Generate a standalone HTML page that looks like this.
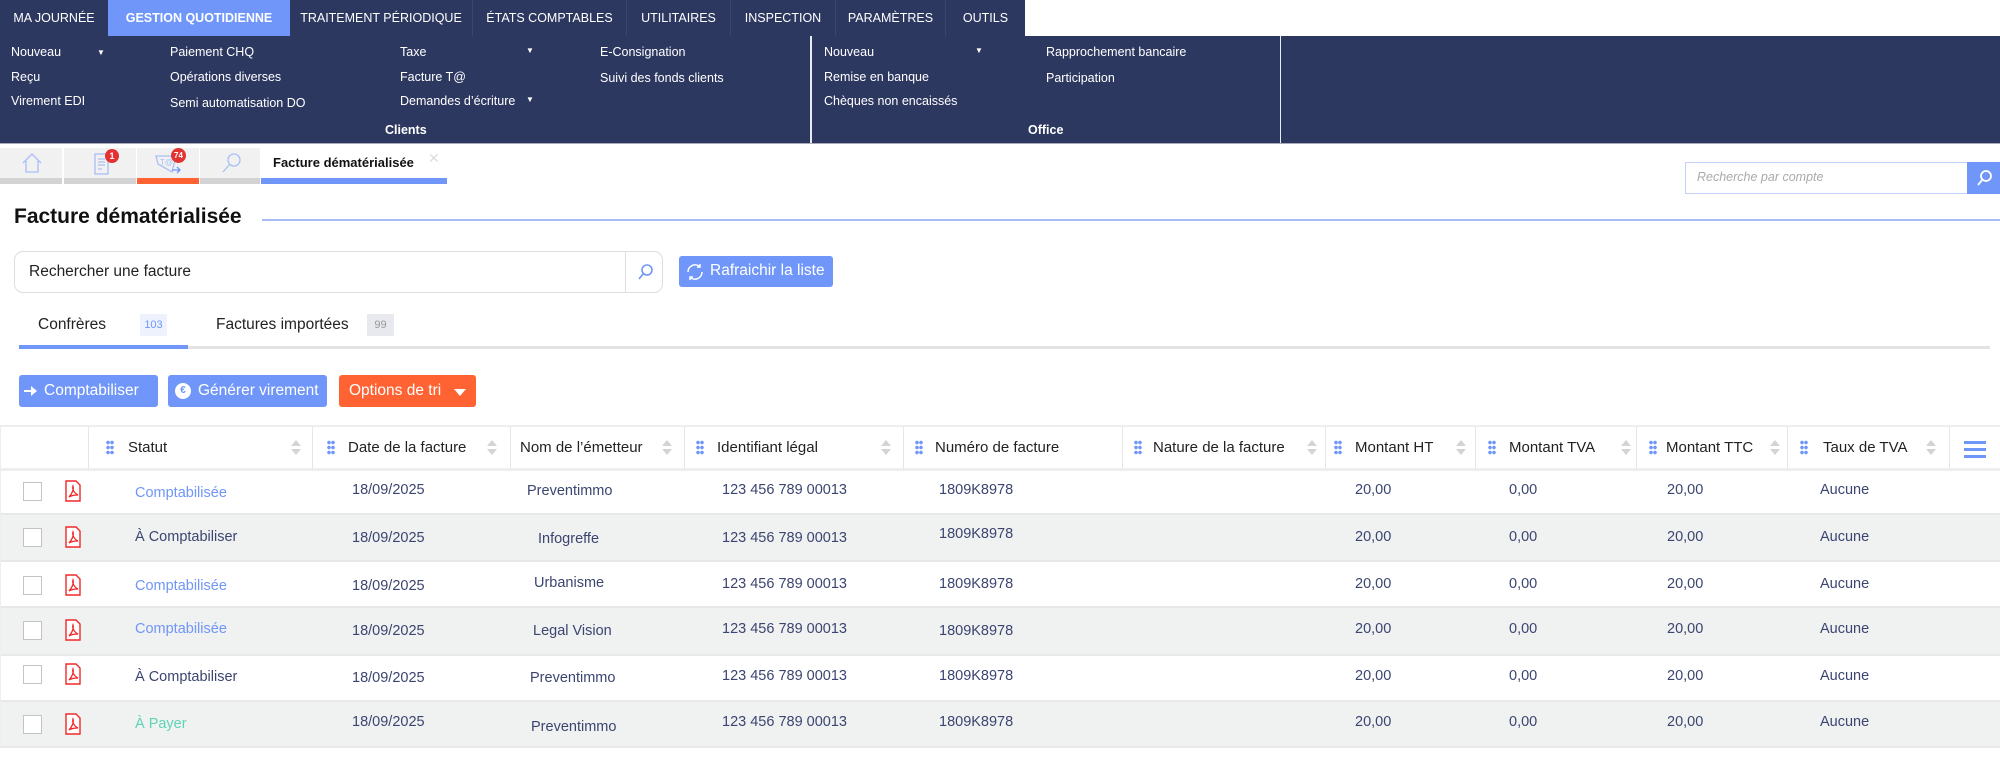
<!DOCTYPE html>
<html><head><meta charset="utf-8"><style>
*{margin:0;padding:0;box-sizing:border-box}
body{width:2000px;height:768px;overflow:hidden;background:#fff;font-family:"Liberation Sans",sans-serif;position:relative;color:#222}
.a{position:absolute;white-space:nowrap}
.nav{left:0;top:0;height:36px;width:1025px;background:#2d3861}
.nt{top:0;height:36px;line-height:36px;color:#fff;font-size:12.5px;text-align:center}
.panel{left:0;top:36px;width:2000px;height:108px;background:#2d3861}
.mi{color:#fff;font-size:12.5px}
.tri{font-size:8px;color:#fff}
.ic{top:148px;height:36px;background:#f1f1f1}
.bar{top:178px;height:6px}
.hd{top:425px;height:46px;border-top:2px solid #eee;border-bottom:3px solid #eee}
.vl{top:427px;height:42px;width:1px;background:#e6e6e6}
.ht{top:439px;font-size:15px;color:#222}
.dots{top:440px;width:8px;height:15px;background:radial-gradient(circle,#6f96f8 1.6px,transparent 2px) 0 0/4px 5px}
.sort{top:440px;width:10px;height:16px}
.sort:before{content:"";position:absolute;left:0;top:0;border:5px solid transparent;border-bottom:6px solid #d4d4d4;border-top:0}
.sort:after{content:"";position:absolute;left:0;top:9px;border:5px solid transparent;border-top:6px solid #d4d4d4;border-bottom:0}
.row{left:0;width:2000px;border-bottom:2px solid #e8e8e8}
.g{background:#f0f1f1}
.c{font-size:14.5px;color:#3b4570}
.cb{width:19px;height:19px;border:1.5px solid #c4c4c4;background:#fff}
.btn{top:375px;height:32px;border-radius:3px;color:#fff;font-size:15.5px;line-height:32px}
</style></head><body>
<div class="a nav"></div>
<div class="a nt" style="left:0;width:108px">MA JOURNÉE</div>
<div class="a nt" style="left:108px;width:182px;background:#6f96f8;font-weight:bold">GESTION QUOTIDIENNE</div>
<div class="a nt" style="left:290px;width:182px">TRAITEMENT PÉRIODIQUE</div>
<div class="a nt" style="left:472px;width:154px;border-left:1px solid #3a4570">ÉTATS COMPTABLES</div>
<div class="a nt" style="left:626px;width:104px;border-left:1px solid #3a4570">UTILITAIRES</div>
<div class="a nt" style="left:730px;width:105px;border-left:1px solid #3a4570">INSPECTION</div>
<div class="a nt" style="left:835px;width:110px;border-left:1px solid #3a4570">PARAMÈTRES</div>
<div class="a nt" style="left:945px;width:80px;border-left:1px solid #3a4570">OUTILS</div>
<div class="a panel"></div>
<div class="a" style="left:810px;top:36px;width:2px;height:108px;background:#e8ebf3"></div>
<div class="a" style="left:1280px;top:36px;width:1px;height:108px;background:#e8ebf3"></div>
<div class="a" style="left:0;top:143px;width:2000px;height:1px;background:#aab"></div>
<div class="a mi" style="left:11px;top:45px">Nouveau</div><div class="a tri" style="left:97px;top:48px">▼</div>
<div class="a mi" style="left:11px;top:70px">Reçu</div>
<div class="a mi" style="left:11px;top:94px">Virement EDI</div>
<div class="a mi" style="left:170px;top:45px">Paiement CHQ</div>
<div class="a mi" style="left:170px;top:70px">Opérations diverses</div>
<div class="a mi" style="left:170px;top:96px">Semi automatisation DO</div>
<div class="a mi" style="left:400px;top:45px">Taxe</div><div class="a tri" style="left:526px;top:46px">▼</div>
<div class="a mi" style="left:400px;top:70px">Facture T@</div>
<div class="a mi" style="left:400px;top:94px">Demandes d’écriture</div><div class="a tri" style="left:526px;top:95px">▼</div>
<div class="a mi" style="left:600px;top:45px">E-Consignation</div>
<div class="a mi" style="left:600px;top:71px">Suivi des fonds clients</div>
<div class="a mi" style="left:385px;top:123px;font-weight:bold">Clients</div>
<div class="a mi" style="left:824px;top:45px">Nouveau</div><div class="a tri" style="left:975px;top:46px">▼</div>
<div class="a mi" style="left:824px;top:70px">Remise en banque</div>
<div class="a mi" style="left:824px;top:94px">Chèques non encaissés</div>
<div class="a mi" style="left:1046px;top:45px">Rapprochement bancaire</div>
<div class="a mi" style="left:1046px;top:71px">Participation</div>
<div class="a mi" style="left:1028px;top:123px;font-weight:bold">Office</div>

<div class="a ic" style="left:0;width:62px"></div>
<div class="a ic" style="left:64px;width:72px"></div>
<div class="a ic" style="left:137px;width:62px"></div>
<div class="a ic" style="left:200px;width:60px"></div>
<div class="a bar" style="left:0;width:62px;background:#d3d3d3"></div>
<div class="a bar" style="left:64px;width:72px;background:#d3d3d3"></div>
<div class="a bar" style="left:137px;width:62px;background:#ff6333"></div>
<div class="a bar" style="left:200px;width:60px;background:#d3d3d3"></div>
<div class="a bar" style="left:261px;width:186px;background:#6f96f8"></div>
<svg class="a" style="left:20px;top:151px" width="24" height="24" viewBox="0 0 24 24" fill="none" stroke="#a9bff7" stroke-width="1.3"><path d="M3 12L12 3l9 9M6 9v12h12V9"/></svg>
<svg class="a" style="left:94px;top:152px" width="16" height="24" viewBox="0 0 16 24" fill="none" stroke="#a9bff7" stroke-width="1.3"><rect x="1" y="2" width="13" height="20"/><path d="M4 7h7M4 10h7M4 13h7M4 17h4"/></svg>
<div class="a" style="left:105px;top:149px;width:14px;height:14px;border-radius:7px;background:#e23232;color:#fff;font-size:9px;text-align:center;line-height:14px;font-weight:bold">1</div>
<svg class="a" style="left:154px;top:152px" width="30" height="24" viewBox="0 0 30 24" fill="none" stroke="#a9bff7" stroke-width="1.3"><path d="M2 4h20l-4 16-14-8z"/><text x="6" y="13" font-size="8" fill="#a9bff7" stroke="none">T@</text><path d="M18 18h8M23 15l3 3-3 3" stroke="#6f96f8"/></svg>
<div class="a" style="left:171px;top:148px;width:15px;height:15px;border-radius:8px;background:#e23232;color:#fff;font-size:8px;text-align:center;line-height:15px;font-weight:bold">74</div>
<svg class="a" style="left:220px;top:151px" width="24" height="24" viewBox="0 0 24 24" fill="none" stroke="#a9bff7" stroke-width="1.3"><circle cx="14" cy="9" r="6"/><path d="M10 13l-7 8"/></svg>
<div class="a" style="left:273px;top:155px;font-size:13px;font-weight:bold;color:#111">Facture dématérialisée</div>
<div class="a" style="left:428px;top:150px;font-size:14px;color:#ddd">✕</div>

<div class="a" style="left:1685px;top:162px;width:283px;height:32px;border:1px solid #c3d2fb"></div>
<div class="a" style="left:1697px;top:170px;font-size:12.5px;font-style:italic;color:#aaa">Recherche par compte</div>
<div class="a" style="left:1967px;top:162px;width:33px;height:32px;background:#6f96f8"></div>
<svg class="a" style="left:1975px;top:169px" width="18" height="18" viewBox="0 0 18 18" fill="none" stroke="#fff" stroke-width="1.8"><circle cx="11" cy="7" r="5"/><path d="M7.5 10.5L3 16"/></svg>

<div class="a" style="left:14px;top:205px;font-size:21px;font-weight:bold;color:#111">Facture dématérialisée</div>
<div class="a" style="left:262px;top:219px;width:1738px;height:2px;background:#a6bcf7"></div>

<div class="a" style="left:14px;top:251px;width:649px;height:42px;border:1.5px solid #ddd;border-radius:9px"></div>
<div class="a" style="left:625px;top:252px;width:1px;height:40px;background:#ddd"></div>
<div class="a" style="left:29px;top:263px;font-size:15.5px;color:#222">Rechercher une facture</div>
<svg class="a" style="left:636px;top:263px" width="18" height="18" viewBox="0 0 18 18" fill="none" stroke="#6f96f8" stroke-width="1.6"><circle cx="11" cy="7" r="5"/><path d="M7.5 10.5L3 16"/></svg>
<div class="a" style="left:679px;top:256px;width:154px;height:31px;background:#6f96f8;border-radius:3px"></div>
<svg class="a" style="left:685px;top:262px" width="20" height="20" viewBox="0 0 20 20" fill="none" stroke="#fff" stroke-width="1.5"><path d="M3 10a7 7 0 0 1 12-5M17 10a7 7 0 0 1-12 5"/><path d="M15 2v3h-3M5 18v-3h3"/></svg>
<div class="a" style="left:710px;top:262px;font-size:15.5px;color:#fff">Rafraichir la liste</div>

<div class="a" style="left:38px;top:316px;font-size:15.5px;color:#222">Confrères</div>
<div class="a" style="left:140px;top:314px;width:27px;height:22px;background:#eef2fd;color:#6f96f8;font-size:11px;text-align:center;line-height:22px">103</div>
<div class="a" style="left:216px;top:316px;font-size:15.5px;color:#222">Factures importées</div>
<div class="a" style="left:367px;top:314px;width:27px;height:22px;background:#e7e9ee;color:#999;font-size:11px;text-align:center;line-height:22px">99</div>
<div class="a" style="left:19px;top:346px;width:1971px;height:3px;background:#e3e3e3"></div>
<div class="a" style="left:19px;top:345px;width:169px;height:4px;background:#6f96f8"></div>

<div class="a btn" style="left:19px;width:139px;background:#6f96f8;padding-left:25px">Comptabiliser</div>
<svg class="a" style="left:23px;top:384px" width="14" height="14" viewBox="0 0 14 14" fill="#fff"><path d="M1 6h7V2l6 5-6 5V8H1z"/></svg>
<div class="a btn" style="left:168px;width:159px;background:#6f96f8;padding-left:30px">Générer virement</div>
<div class="a" style="left:175px;top:383px;width:16px;height:16px;border-radius:8px;background:#fff;color:#6f96f8;font-size:10px;text-align:center;line-height:16px;font-weight:bold">€</div>
<div class="a btn" style="left:339px;width:137px;background:#ff6333;padding-left:10px">Options de tri</div>
<div class="a" style="left:454px;top:389px;border:6px solid transparent;border-top:7px solid #fff;border-bottom:0"></div>

<div class="a" style="left:0;top:425px;width:2000px;height:46px;border-top:2px solid #eee;border-bottom:3px solid #eee;border-left:1px solid #eee"></div>
<div class="a vl" style="left:88px"></div><div class="a vl" style="left:312px"></div><div class="a vl" style="left:510px"></div><div class="a vl" style="left:684px"></div><div class="a vl" style="left:903px"></div><div class="a vl" style="left:1122px"></div><div class="a vl" style="left:1325px"></div><div class="a vl" style="left:1475px"></div><div class="a vl" style="left:1636px"></div><div class="a vl" style="left:1787px"></div><div class="a vl" style="left:1949px"></div>
<div class="a dots" style="left:106px"></div><div class="a ht" style="left:128px">Statut</div><div class="a sort" style="left:291px"></div>
<div class="a dots" style="left:327px"></div><div class="a ht" style="left:348px">Date de la facture</div><div class="a sort" style="left:487px"></div>
<div class="a ht" style="left:520px">Nom de l’émetteur</div><div class="a sort" style="left:662px"></div>
<div class="a dots" style="left:696px"></div><div class="a ht" style="left:717px">Identifiant légal</div><div class="a sort" style="left:881px"></div>
<div class="a dots" style="left:915px"></div><div class="a ht" style="left:935px">Numéro de facture</div>
<div class="a dots" style="left:1134px"></div><div class="a ht" style="left:1153px">Nature de la facture</div><div class="a sort" style="left:1307px"></div>
<div class="a dots" style="left:1334px"></div><div class="a ht" style="left:1355px">Montant HT</div><div class="a sort" style="left:1456px"></div>
<div class="a dots" style="left:1488px"></div><div class="a ht" style="left:1509px">Montant TVA</div><div class="a sort" style="left:1621px"></div>
<div class="a dots" style="left:1649px"></div><div class="a ht" style="left:1666px">Montant TTC</div><div class="a sort" style="left:1770px"></div>
<div class="a dots" style="left:1800px"></div><div class="a ht" style="left:1823px">Taux de TVA</div><div class="a sort" style="left:1926px"></div>
<div class="a" style="left:1964px;top:441px;width:22px;height:3px;background:#6f96f8;box-shadow:0 7px 0 #6f96f8,0 14px 0 #6f96f8"></div>

<div class="a row" style="top:471px;height:44px"></div>
<div class="a row g" style="top:515px;height:47px"></div>
<div class="a row" style="top:562px;height:46px"></div>
<div class="a row g" style="top:608px;height:48px"></div>
<div class="a row" style="top:656px;height:46px"></div>
<div class="a row g" style="top:702px;height:46px"></div>
<div class="a" style="left:0;top:471px;width:1px;height:277px;background:#eee"></div>

<svg width="0" height="0" style="position:absolute"><defs><symbol id="pdf" viewBox="0 0 16 22"><path d="M1 1h10l4 4v16H1z" fill="#fff" stroke="#f02828" stroke-width="1.4"/><path d="M4 17c3-3 5-8 4-11-1 3 1 7 5 9-3 0-6 0-9 2z" fill="none" stroke="#f02828" stroke-width="1.3"/></symbol></defs></svg>

<!-- rows -->
<div class="a cb" style="left:23px;top:482px"></div><svg class="a" style="left:65px;top:480px" width="16" height="22"><use href="#pdf"/></svg>
<div class="a c" style="left:135px;top:485px;color:#6f96f8">Comptabilisée</div>
<div class="a c" style="left:352px;top:482px">18/09/2025</div><div class="a c" style="left:527px;top:483px">Preventimmo</div><div class="a c" style="left:722px;top:482px">123 456 789 00013</div><div class="a c" style="left:939px;top:482px">1809K8978</div><div class="a c" style="left:1355px;top:482px">20,00</div><div class="a c" style="left:1509px;top:482px">0,00</div><div class="a c" style="left:1667px;top:482px">20,00</div><div class="a c" style="left:1820px;top:482px">Aucune</div>

<div class="a cb" style="left:23px;top:528px"></div><svg class="a" style="left:65px;top:526px" width="16" height="22"><use href="#pdf"/></svg>
<div class="a c" style="left:135px;top:529px">À Comptabiliser</div>
<div class="a c" style="left:352px;top:530px">18/09/2025</div><div class="a c" style="left:538px;top:531px">Infogreffe</div><div class="a c" style="left:722px;top:530px">123 456 789 00013</div><div class="a c" style="left:939px;top:526px">1809K8978</div><div class="a c" style="left:1355px;top:529px">20,00</div><div class="a c" style="left:1509px;top:529px">0,00</div><div class="a c" style="left:1667px;top:529px">20,00</div><div class="a c" style="left:1820px;top:529px">Aucune</div>

<div class="a cb" style="left:23px;top:576px"></div><svg class="a" style="left:65px;top:574px" width="16" height="22"><use href="#pdf"/></svg>
<div class="a c" style="left:135px;top:578px;color:#6f96f8">Comptabilisée</div>
<div class="a c" style="left:352px;top:578px">18/09/2025</div><div class="a c" style="left:534px;top:575px">Urbanisme</div><div class="a c" style="left:722px;top:576px">123 456 789 00013</div><div class="a c" style="left:939px;top:576px">1809K8978</div><div class="a c" style="left:1355px;top:576px">20,00</div><div class="a c" style="left:1509px;top:576px">0,00</div><div class="a c" style="left:1667px;top:576px">20,00</div><div class="a c" style="left:1820px;top:576px">Aucune</div>

<div class="a cb" style="left:23px;top:621px"></div><svg class="a" style="left:65px;top:619px" width="16" height="22"><use href="#pdf"/></svg>
<div class="a c" style="left:135px;top:621px;color:#6f96f8">Comptabilisée</div>
<div class="a c" style="left:352px;top:623px">18/09/2025</div><div class="a c" style="left:533px;top:623px">Legal Vision</div><div class="a c" style="left:722px;top:621px">123 456 789 00013</div><div class="a c" style="left:939px;top:623px">1809K8978</div><div class="a c" style="left:1355px;top:621px">20,00</div><div class="a c" style="left:1509px;top:621px">0,00</div><div class="a c" style="left:1667px;top:621px">20,00</div><div class="a c" style="left:1820px;top:621px">Aucune</div>

<div class="a cb" style="left:23px;top:665px"></div><svg class="a" style="left:65px;top:663px" width="16" height="22"><use href="#pdf"/></svg>
<div class="a c" style="left:135px;top:669px">À Comptabiliser</div>
<div class="a c" style="left:352px;top:670px">18/09/2025</div><div class="a c" style="left:530px;top:670px">Preventimmo</div><div class="a c" style="left:722px;top:668px">123 456 789 00013</div><div class="a c" style="left:939px;top:668px">1809K8978</div><div class="a c" style="left:1355px;top:668px">20,00</div><div class="a c" style="left:1509px;top:668px">0,00</div><div class="a c" style="left:1667px;top:668px">20,00</div><div class="a c" style="left:1820px;top:668px">Aucune</div>

<div class="a cb" style="left:23px;top:715px"></div><svg class="a" style="left:65px;top:713px" width="16" height="22"><use href="#pdf"/></svg>
<div class="a c" style="left:135px;top:716px;color:#5ed3b5">À Payer</div>
<div class="a c" style="left:352px;top:714px">18/09/2025</div><div class="a c" style="left:531px;top:719px">Preventimmo</div><div class="a c" style="left:722px;top:714px">123 456 789 00013</div><div class="a c" style="left:939px;top:714px">1809K8978</div><div class="a c" style="left:1355px;top:714px">20,00</div><div class="a c" style="left:1509px;top:714px">0,00</div><div class="a c" style="left:1667px;top:714px">20,00</div><div class="a c" style="left:1820px;top:714px">Aucune</div>
</body></html>
